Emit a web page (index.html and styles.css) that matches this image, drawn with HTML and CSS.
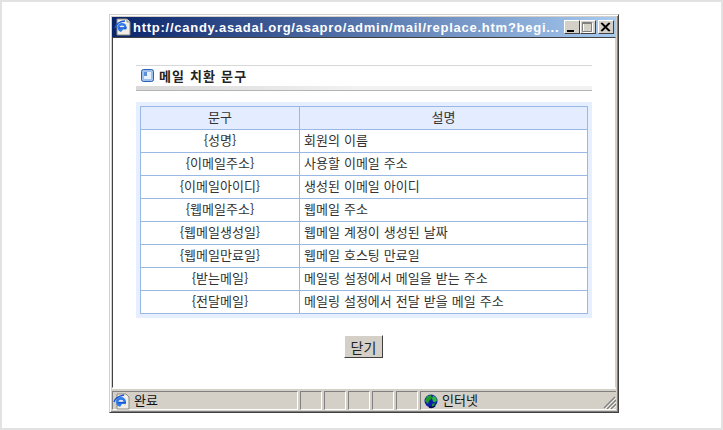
FILE: index.html
```html
<!DOCTYPE html>
<html lang="ko">
<head>
<meta charset="utf-8">
<title>메일 치환 문구</title>
<link rel="stylesheet" href="styles.css">
</head>
<body>
<div class="frame">
  <div class="window">
    <div class="titlebar">
      <svg class="ie-doc" width="18" height="18" viewBox="0 0 18 18">
        <path d="M3 1h10l3 3v13H3z" fill="#f0eee6" stroke="#8a8a80"/>
        <path d="M13 1v3h3" fill="#fff" stroke="#8a8a80"/>
        <path d="M1 10c1-4 5-7 10-7" fill="none" stroke="#1a55d8" stroke-width="1.4"/>
        <ellipse cx="8" cy="9.5" rx="4.6" ry="4.6" fill="#2f7be8"/>
        <ellipse cx="8" cy="9" rx="2.4" ry="1.6" fill="#f0eee6"/>
        <rect x="5" y="9.2" width="7.5" height="1.5" fill="#1a55d8"/>
        <path d="M9 11.6h3.4L11 14H7z" fill="#f0eee6"/>
      </svg>
      <span class="title-text">http://candy.asadal.org/asapro/admin/mail/replace.htm?begi...</span>
      <div class="winbtns">
        <span class="winbtn"><svg width="15" height="13" viewBox="0 0 15 13"><rect x="3" y="9" width="7" height="2" fill="#000"/></svg></span>
        <span class="winbtn disabled"><svg width="15" height="13" viewBox="0 0 15 13"><path d="M3.500 2.500h9v9h-9z" fill="none" stroke="#fff"/><path d="M2.500 1.500h9v9h-9z" fill="none" stroke="#808080"/><path d="M2.500 2.500h9" stroke="#808080"/></svg></span>
        <span class="winbtn close"><svg width="15" height="13" viewBox="0 0 15 13"><path d="M3 2l8 8M11 2l-8 8M4 2l8 8M12 2l-8 8" stroke="#000" stroke-width="1.1"/></svg></span>
      </div>
    </div>
    <div class="client">
      <h1 class="heading">
        <svg width="13" height="13" viewBox="0 0 13 13"><rect x=".5" y=".5" width="12" height="12" rx="2" fill="#9fc0ec" stroke="#2a62ae"/><rect x="3" y="3" width="7" height="7" fill="#5c8fd6"/><path d="M3 10V7h3V3h4v7z" fill="#e8f1fc"/></svg>
        <span>메일 치환 문구</span>
      </h1>
      <div class="heading-rule"></div>
      <div class="table-wrap">
        <table class="subst">
          <thead>
            <tr><th class="c1">문구</th><th>설명</th></tr>
          </thead>
          <tbody>
            <tr><td class="c1">{성명}</td><td class="desc">회원의 이름</td></tr>
            <tr><td class="c1">{이메일주소}</td><td class="desc">사용할 이메일 주소</td></tr>
            <tr><td class="c1">{이메일아이디}</td><td class="desc">생성된 이메일 아이디</td></tr>
            <tr><td class="c1">{웹메일주소}</td><td class="desc">웹메일 주소</td></tr>
            <tr><td class="c1">{웹메일생성일}</td><td class="desc">웹메일 계정이 생성된 날짜</td></tr>
            <tr><td class="c1">{웹메일만료일}</td><td class="desc">웹메일 호스팅 만료일</td></tr>
            <tr><td class="c1">{받는메일}</td><td class="desc">메일링 설정에서 메일을 받는 주소</td></tr>
            <tr><td class="c1">{전달메일}</td><td class="desc">메일링 설정에서 전달 받을 메일 주소</td></tr>
          </tbody>
        </table>
      </div>
      <div class="actions"><button class="close-btn" type="button">닫기</button></div>
    </div>
    <div class="statusbar">
      <div class="cell main">
        <svg width="18" height="18" viewBox="0 0 18 18">
          <path d="M4 2h9l3 3v12H4z" fill="#f0eee6" stroke="#8a8a80"/>
          <path d="M1 10c1-4 5-6 10-7" fill="none" stroke="#1a55d8" stroke-width="1.4"/>
          <circle cx="8" cy="10" r="5" fill="#2f7be8"/>
          <ellipse cx="8" cy="9.4" rx="2.5" ry="1.6" fill="#f0eee6"/>
          <rect x="5" y="9.8" width="8" height="1.5" fill="#1a55d8"/>
          <path d="M9 12h3.6L11 15H7z" fill="#f0eee6"/>
        </svg>
        <span class="status-text">완료</span>
      </div>
      <div class="cell small"></div>
      <div class="cell small"></div>
      <div class="cell small"></div>
      <div class="cell small"></div>
      <div class="cell small"></div>
      <div class="cell zone">
        <svg width="16" height="16" viewBox="0 0 16 16">
          <circle cx="8" cy="8" r="6.5" fill="#0c1fa8"/>
          <path d="M4 3l4-1 1 3-3 3-1 3-3-3z" fill="#1f9a2c"/>
          <path d="M10 2.500l3 2 1 3-2 2-2-1-1-3z" fill="#2cb83a"/>
          <path d="M9 11l3-1-1 3-2 1z" fill="#1f9a2c"/>
          <path d="M6 14a6.500 6.500 0 0 0 6-1" fill="none" stroke="#05084a" stroke-width="1.500"/>
        </svg>
        <span class="status-text">인터넷</span>
        <svg class="grip" width="13" height="13" viewBox="0 0 13 13">
          <path d="M12 1L1 12M13 4L4 13M13 8l-5 5" stroke="#808080" stroke-width="1.300"/>
          <path d="M13 2L2 13M13 6l-7 7M13 10l-3 3" stroke="#fff" stroke-width=".8"/>
        </svg>
      </div>
    </div>
  </div>
</div>
</body>
</html>
```
FILE: styles.css
```css
* { box-sizing: border-box; }
html, body { margin: 0; padding: 0; }
body {
  width: 723px;
  height: 430px;
  font-family: "Noto Sans CJK KR", "Noto Sans", sans-serif;
  font-size: 13px;
  color: #333;
  background: #fff;
  overflow: hidden;
}
.frame {
  width: 723px;
  height: 430px;
  border: 2px solid #e2e2e2;
  padding: 12px 0 0 107px;
}
.window {
  width: 510px;
  height: 399px;
  display: flex;
  flex-direction: column;
  background: #d4d0c8;
  border: 1px solid;
  border-color: #d4d0c8 #404040 #404040 #d4d0c8;
  box-shadow: inset 1px 1px 0 #fff, inset -1px -1px 0 #808080;
  padding: 2px;
}
.titlebar {
  height: 20px;
  flex: none;
  display: flex;
  align-items: center;
  padding: 0 2px 0 2px;
  background: linear-gradient(to right, #0a246a, #a6caf0);
}
.ie-doc { flex: none; }
.title-text {
  margin-left: 1px;
  width: 430px;
  font: bold 13px "Liberation Sans", sans-serif;
  letter-spacing: 0.74px;
  color: #fff;
  white-space: nowrap;
}
.winbtns { margin-left: auto; display: flex; }
.winbtn {
  width: 16px;
  height: 14px;
  display: block;
  background: #d4d0c8;
  border: 1px solid;
  border-color: #fff #404040 #404040 #fff;
  line-height: 0;
}
.winbtn svg { display: block; margin: 0 0 0 -1px; }
.winbtn.close { margin-left: 2px; }
.client {
  flex: 1;
  background: #fff;
  border-top: 1px solid #404040;
  border-left: 1px solid #404040;
  border-right: 1px solid #d4d0c8;
  border-bottom: 1px solid #fff;
  padding: 27px 23px 0 23px;
}
.heading {
  margin: 0;
  height: 21px;
  border-top: 1px solid #d8d8d8;
  display: flex;
  align-items: center;
  gap: 5px;
  padding: 0 0 1px 5px;
  font-size: 13px;
  font-weight: bold;
  letter-spacing: 1.15px;
  color: #222;
}
.heading-rule {
  height: 5px;
  border-bottom: 1px solid #b4b4b4;
  background: linear-gradient(to right, #d8d8d8, #f2f2f2 50%, #f2f2f2);
}
.table-wrap {
  margin-top: 11px;
  padding: 4px;
  background: #e6efff;
}
.subst {
  width: 448px;
  table-layout: fixed;
  border-collapse: collapse;
  border: 1px solid #9ab8e4;
  background: #fff;
  font-size: 13px;
}
.subst th, .subst td {
  height: 23px;
  padding: 0 0 3px;
  border: 1px solid #9ab8e4;
  text-align: center;
  font-weight: normal;
  line-height: 16px;
  white-space: nowrap;
}
.subst th { background: #e3edff; }
.subst .c1 { width: 159px; }
.subst .desc { text-align: left; padding-left: 4px; word-spacing: 0.4px; }
.actions { display: flex; justify-content: center; margin-top: 17px; padding-right: 1px; }
.close-btn {
  width: 39px;
  height: 23px;
  padding: 0;
  background: #d4d0c8;
  border: 1px solid;
  border-color: #fff #404040 #404040 #fff;
  font: 14px "Noto Sans CJK KR", sans-serif;
  color: #222;
}
.statusbar {
  height: 22px;
  flex: none;
  display: flex;
  gap: 2px;
  padding-top: 2px;
  border-top: 1px solid #fff;
  color: #111;
}
.cell {
  height: 19px;
  border: 1px solid;
  border-color: #808080 #fff #fff #808080;
  display: flex;
  align-items: center;
  font-size: 13px;
}
.status-text { padding-bottom: 2px; }
.cell.main { width: 186px; gap: 3px; }
.cell.small { width: 22px; }
.cell.zone { flex: 1; position: relative; gap: 3px; padding-left: 2px; border-right: 0; }
.grip { position: absolute; right: 0; bottom: 0; }
```
